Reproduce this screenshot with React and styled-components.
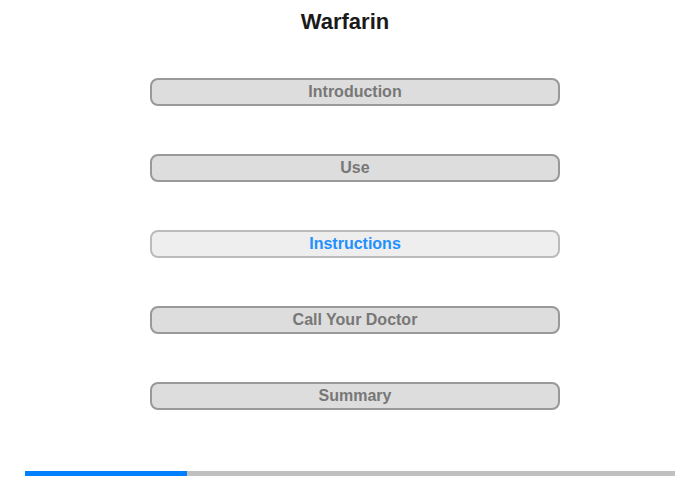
import React from 'react';
import styled, { createGlobalStyle } from 'styled-components';

const GlobalStyle = createGlobalStyle`
  html, body {
    margin: 0;
    padding: 0;
    background: #ffffff;
    font-family: "Liberation Sans", Arial, sans-serif;
  }
`;

const Page = styled.div`
  width: 700px;
  height: 480px;
  display: flex;
  flex-direction: column;
  align-items: center;
  box-sizing: border-box;
  padding-top: 9px;
`;

const Title = styled.h1`
  margin: 0 10px 0 0;
  font-size: 22px;
  line-height: 26px;
  font-weight: bold;
  color: #1a1a1a;
`;

const Menu = styled.nav`
  display: flex;
  flex-direction: column;
  gap: 48px;
  margin: 43px 0 0 10px;
`;

const MenuButton = styled.button`
  width: 410px;
  height: 28px;
  box-sizing: border-box;
  border-radius: 8px;
  border: 2px solid ${p => (p.$active ? '#bbbbbb' : '#999999')};
  background: ${p => (p.$active ? '#eeeeee' : '#dddddd')};
  color: ${p => (p.$active ? '#1e90ff' : '#777777')};
  font-family: "Liberation Sans", Arial, sans-serif;
  font-size: 16px;
  font-weight: bold;
  padding: 0;
  cursor: pointer;
`;

const Progress = styled.div`
  width: 650px;
  height: 5px;
  background: #c0c0c0;
  margin-top: auto;
  margin-bottom: 4px;
`;

const ProgressFill = styled.div`
  height: 100%;
  background: #0080ff;
`;

const items = ['Introduction', 'Use', 'Instructions', 'Call Your Doctor', 'Summary'];

export default function App() {
  return (
    <>
      <GlobalStyle />
      <Page>
        <Title>Warfarin</Title>
        <Menu>
          {items.map(label => (
            <MenuButton key={label} $active={label === 'Instructions'}>
              {label}
            </MenuButton>
          ))}
        </Menu>
        <Progress>
          <ProgressFill style={{ width: `${(162 / 650) * 100}%` }} />
        </Progress>
      </Page>
    </>
  );
}
